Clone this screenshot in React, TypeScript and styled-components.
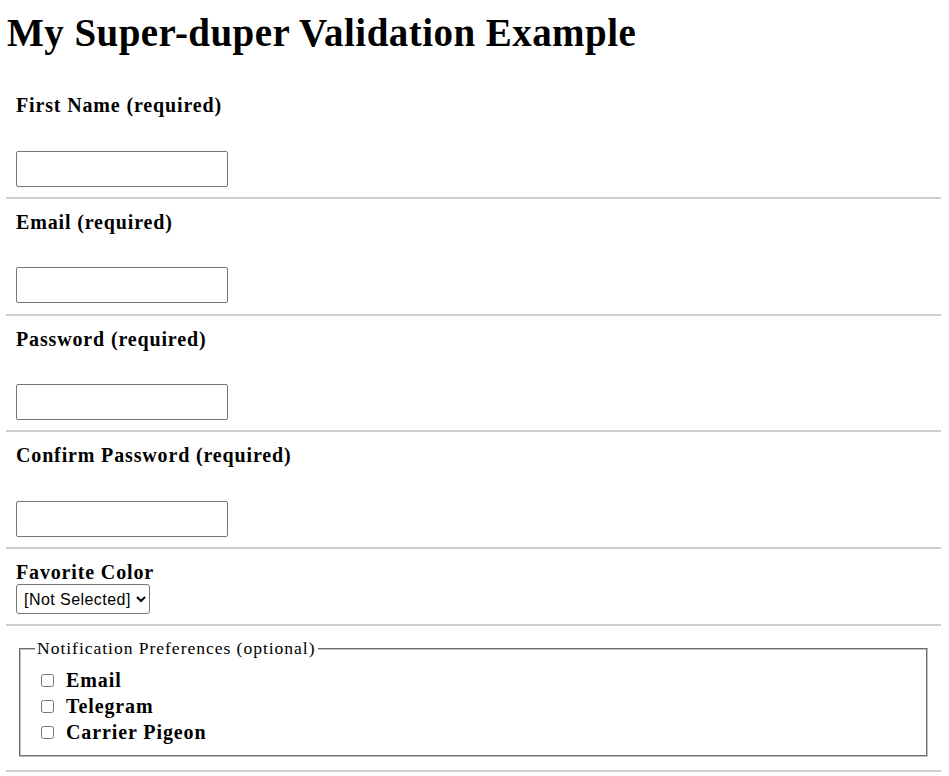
import React from 'react'
import styled, { createGlobalStyle } from 'styled-components'

const GlobalStyle = createGlobalStyle`
	body {
		margin: 0;
		padding: 8px 8px 0 6px;
		background: #fff;
		color: #000;
		font-family: 'Liberation Serif', 'Times New Roman', serif;
	}
`

const Title = styled.h1`
	font-size: 39px;
	font-weight: bold;
	letter-spacing: 0.45px;
	margin: 2px 0 27px 1px;
`

const Section = styled.div<{ top?: number }>`
	border-bottom: 2px solid #cecece;
	padding: ${(props) => props.top ?? 12}px 10px 10.25px;
`

const Label = styled.label<{ gap?: number }>`
	display: block;
	font-size: 20px;
	font-weight: bold;
	letter-spacing: 0.85px;
	margin-bottom: ${(props) => props.gap ?? 0}px;
`

const TextInput = styled.input`
	display: block;
	box-sizing: border-box;
	width: 212px;
	height: 36px;
	margin: 0;
	border: 1px solid #767676;
	border-radius: 2px;
	font-size: 16px;
`

const Select = styled.select`
	display: block;
	box-sizing: border-box;
	height: 30px;
	margin: 0;
	padding: 0 2px 0 3px;
	border: 1px solid #767676;
	border-radius: 3px;
	background: #fff;
	font-family: 'Liberation Sans', Arial, sans-serif;
	font-size: 16px;
	letter-spacing: 0.45px;
	color: #000;
`

const Fieldset = styled.fieldset`
	margin: 12px 3px 2px;
	padding: 8px 14px 10px;
	border: 2px groove rgb(192, 192, 192);
`

const Legend = styled.legend`
	font-size: 17.6px;
	letter-spacing: 0.95px;
	padding: 0 2px;
`

const OptionRow = styled.div`
	font-size: 20px;
	font-weight: bold;
	letter-spacing: 0.9px;
	line-height: 26px;
	padding-left: 2px;
	input {
		margin: 3px 12px 3px 4px;
	}
`

const fields = [
	{ id: 'firstName', label: 'First Name (required)', type: 'text' },
	{ id: 'email', label: 'Email (required)', type: 'email' },
	{ id: 'password', label: 'Password (required)', type: 'password' },
	{ id: 'confirm', label: 'Confirm Password (required)', type: 'password' },
]

const channels = ['Email', 'Telegram', 'Carrier Pigeon']

export default function App() {
	return (
		<>
			<GlobalStyle />
			<Title>My Super-duper Validation Example</Title>
			<form>
				{fields.map((f) => (
					<Section key={f.id}>
						<Label htmlFor={f.id} gap={33.5}>
							{f.label}
						</Label>
						<TextInput id={f.id} type={f.type} />
					</Section>
				))}
				<Section top={12}>
					<Label htmlFor="color">Favorite Color</Label>
					<Select id="color" defaultValue="">
						<option value="">[Not Selected]</option>
						<option value="red">Red</option>
						<option value="green">Green</option>
						<option value="blue">Blue</option>
					</Select>
				</Section>
				<Section top={0}>
					<Fieldset>
						<Legend>Notification Preferences (optional)</Legend>
						{channels.map((c) => (
							<OptionRow key={c}>
								<input type="checkbox" id={c} />
								<label htmlFor={c}>{c}</label>
							</OptionRow>
						))}
					</Fieldset>
				</Section>
			</form>
		</>
	)
}
